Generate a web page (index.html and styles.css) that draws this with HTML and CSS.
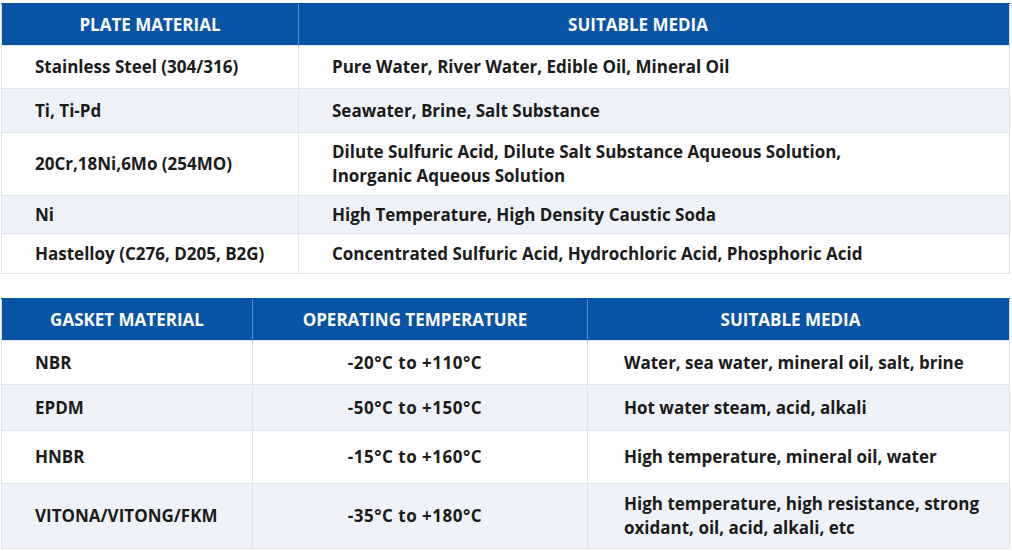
FILE: index.html
```html
<!DOCTYPE html>
<html lang="en">
<head>
<meta charset="utf-8">
<title>Plate and Gasket Materials</title>
<link rel="stylesheet" href="styles.css">
</head>
<body>
<main class="page">
  <table class="spec spec-plate">
    <colgroup><col class="c-plate"><col></colgroup>
    <thead>
      <tr class="head"><th>PLATE MATERIAL</th><th class="shift-l2">SUITABLE MEDIA</th></tr>
    </thead>
    <tbody>
      <tr class="h43"><td class="pl">Stainless Steel (304/316)</td><td class="pl">Pure Water, River Water, Edible Oil, Mineral Oil</td></tr>
      <tr class="h44 alt"><td class="pl">Ti, Ti-Pd</td><td class="pl">Seawater, Brine, Salt Substance</td></tr>
      <tr class="h63"><td class="pl">20Cr,18Ni,6Mo (254MO)</td><td class="pl">Dilute Sulfuric Acid, Dilute Salt Substance Aqueous Solution,<br>Inorganic Aqueous Solution</td></tr>
      <tr class="h38 alt"><td class="pl">Ni</td><td class="pl">High Temperature, High Density Caustic Soda</td></tr>
      <tr class="h40"><td class="pl">Hastelloy (C276, D205, B2G)</td><td class="pl">Concentrated Sulfuric Acid, Hydrochloric Acid, Phosphoric Acid</td></tr>
    </tbody>
  </table>

  <table class="spec spec-gasket">
    <colgroup><col class="c-gasket"><col class="c-temp"><col></colgroup>
    <thead>
      <tr class="head"><th>GASKET MATERIAL</th><th class="shift-l">OPERATING TEMPERATURE</th><th class="shift-l3">SUITABLE MEDIA</th></tr>
    </thead>
    <tbody>
      <tr class="h45"><td class="pl">NBR</td><td class="ctr">-20°C to +110°C</td><td class="pm">Water, sea water, mineral oil, salt, brine</td></tr>
      <tr class="h46 alt"><td class="pl">EPDM</td><td class="ctr">-50°C to +150°C</td><td class="pm">Hot water steam, acid, alkali</td></tr>
      <tr class="h53"><td class="pl">HNBR</td><td class="ctr">-15°C to +160°C</td><td class="pm">High temperature, mineral oil, water</td></tr>
      <tr class="h65 alt"><td class="pl">VITONA/VITONG/FKM</td><td class="ctr">-35°C to +180°C</td><td class="pm">High temperature, high resistance, strong<br>oxidant, oil, acid, alkali, etc</td></tr>
    </tbody>
  </table>
</main>
</body>
</html>
```

FILE: styles.css
```css
* { box-sizing: border-box; }
html, body { margin: 0; padding: 0; background: #ffffff; }
body {
  font-family: "Open Sans", "Noto Sans", "Liberation Sans", sans-serif;
  color: #1b1b1b;
}
.page {
  display: flex;
  flex-direction: column;
  gap: 24px;
  padding: 3px 2px 0 1px;
  width: 1012px;
}
.spec {
  width: 1009px;
  border-collapse: collapse;
  table-layout: fixed;
  border: 1px solid #d3deec;
}
.c-plate { width: 297px; }
.c-gasket { width: 251px; }
.c-temp { width: 335px; }

.head { height: 42px; background: #0754a6; }
.head th {
  color: #ffffff;
  font-size: 17px;
  font-weight: 700;
  text-align: center;
  padding: 0;
  border-left: 1px solid #5a8ed0;
  border-top: 1px solid #0754a6;
}
.head th:first-child { border-left: none; }
.head th.shift-l { padding-right: 10px; }
.head th.shift-l2 { padding-right: 32px; }
.head th.shift-l3 { padding-right: 16px; }

.spec td {
  font-size: 17px;
  font-weight: 700;
  line-height: 24px;
  padding: 0;
  border: 1px solid #dde5f0;
  vertical-align: middle;
}
.spec tr.alt td { background: #eff3f9; }
.pl { padding-left: 33px !important; }
.pm { padding-left: 36px !important; }
.ctr { text-align: center; padding-right: 10px !important; letter-spacing: 0.5px; }

.h38 { height: 38px; }
.h40 { height: 40px; }
.h43 { height: 43px; }
.h44 { height: 44px; }
.h45 { height: 44px; }
.h46 { height: 46px; }
.h53 { height: 53px; }
.h63 { height: 63px; }
.h65 { height: 65px; }
```
